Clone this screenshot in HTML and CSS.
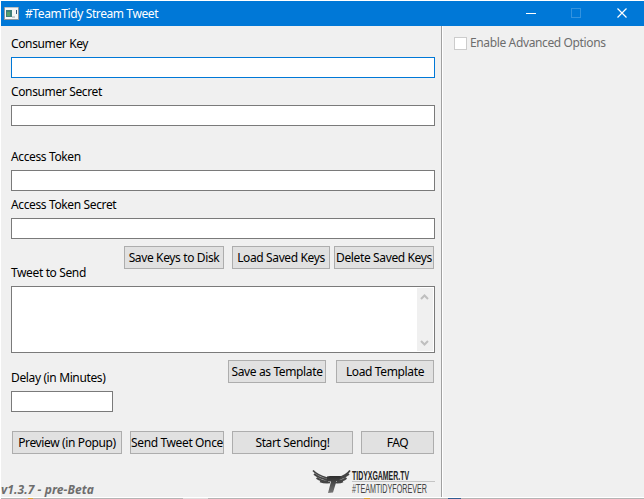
FILE: index.html
```html
<!DOCTYPE html>
<html lang="en">
<head>
<meta charset="utf-8">
<title>#TeamTidy Stream Tweet</title>
<link rel="stylesheet" href="styles.css">
</head>
<body>
<div class="window">
  <header class="titlebar">
    <svg class="app-icon" width="15" height="13" viewBox="0 0 15 13">
      <rect width="15" height="13" fill="#8d979e"/>
      <rect x="1" y="1" width="13" height="11" fill="#f4f6f6"/>
      <rect x="1" y="0" width="13" height="1" fill="#b9c2c8"/>
      <rect x="2" y="3" width="6" height="7" fill="#3f7f78"/>
      <rect x="3" y="5" width="3" height="4" fill="#55a06b"/>
      <rect x="8" y="9" width="3" height="2" fill="#c8cdd0"/>
      <rect x="12" y="3" width="1" height="4" fill="#35577a"/>
    </svg>
    <span class="title">#TeamTidy Stream Tweet</span>
    <svg class="controls" width="104" height="25" viewBox="0 0 104 25" fill="none">
      <path d="M0 12.500H10" stroke="#fff"/>
      <rect x="45.500" y="7.500" width="9" height="9" stroke="#3393df"/>
      <path d="M91.500 7.500L100.500 16.500M100.500 7.500L91.500 16.500" stroke="#fff" stroke-width="1.200"/>
    </svg>
  </header>
  <main class="body">
    <section class="left">
      <label class="label" for="ck">Consumer Key</label>
      <input class="field focused" id="ck">
      <label class="label" for="cs">Consumer Secret</label>
      <input class="field" id="cs">
      <label class="label token" for="at">Access Token</label>
      <input class="field" id="at">
      <label class="label" for="ats">Access Token Secret</label>
      <input class="field" id="ats">
      <div class="row keys">
        <button class="w100">Save Keys to Disk</button>
        <button class="w98">Load Saved Keys</button>
        <button class="w100">Delete Saved Keys</button>
      </div>
      <label class="label tweet">Tweet to Send</label>
      <div class="memo">
        <div class="scroll">
          <svg width="16" height="63" viewBox="0 0 16 63" fill="none" stroke="#bfbfbf" stroke-width="2">
            <path d="M4 11L7.500 7.500L11 11M4 53L7.500 56.500L11 53"/>
          </svg>
        </div>
      </div>
      <div class="row templates">
        <button class="w98">Save as Template</button>
        <button class="w98">Load Template</button>
      </div>
      <label class="label delay" for="dl">Delay (in Minutes)</label>
      <input class="field short" id="dl">
      <div class="row actions">
        <button class="w110">Preview (in Popup)</button>
        <button class="w94">Send Tweet Once</button>
        <button class="w121">Start Sending!</button>
        <button class="w73">FAQ</button>
      </div>
      <footer class="foot">
        <span class="version">v1.3.7 - pre-Beta</span>
        <svg class="logo" width="124" height="30" viewBox="0 0 124 30">
          <defs><linearGradient id="g" x2="0" y2="1"><stop stop-color="#2c2c2c"/><stop offset="1" stop-color="#777"/></linearGradient></defs>
          <g fill="none" stroke="#444" stroke-width="1.700">
            <path d="M0 2.500Q4 7 14 10M1 6Q6 10 15 12M3.500 10Q8 13 15 13.500M7 13.500Q11 15 17 14.500"/>
            <path d="M37 2.500Q34 7 25 10M36 6Q31 10 24 12M33.500 10Q30 13 24 13.500M30 13.500Q27 15 22 14.500"/>
          </g>
          <path d="M14 8.500L17 8H28L26 13H23.500L20 24.500L15 25L18 13.500H14Z" fill="url(#g)"/>
          <path d="M39 13.500H122" stroke="#c4c4c4"/>
          <text class="brand" x="39" y="12" textLength="57" lengthAdjust="spacingAndGlyphs">TIDYXGAMER.TV</text>
          <text class="tag" x="39" y="24.700" textLength="75" lengthAdjust="spacingAndGlyphs">#TEAMTIDYFOREVER</text>
        </svg>
      </footer>
    </section>
    <aside class="right">
      <label class="check"><span class="box"></span><span>Enable Advanced Options</span></label>
    </aside>
  </main>
  <div class="edge"><i class="e1"></i><i class="e2"></i><i class="e3"></i><i class="e4"></i></div>
</div>
</body>
</html>
```
FILE: styles.css
```css
* { box-sizing: border-box; }
body { margin: 0; background: #fff; overflow: hidden; }
.window {
  width: 644px; height: 499px; padding: 1px 0 0 1px;
  display: flex; flex-direction: column;
  font: 12px/16px "Noto Sans", "Open Sans", sans-serif; letter-spacing: -0.37px; color: #000;
}
.titlebar { height: 25px; flex: none; background: #0078d7; display: flex; align-items: center; padding-left: 3px; color: #fff; }
.title { margin-left: 6px; flex: 1; letter-spacing: -0.4px; }
.controls { flex: none; margin-right: 14px; }
.body { height: 471px; flex: none; display: flex; background: #f0f0f0; }
.left { width: 441px; padding: 10px 7px 0 10px; border-right: 1px solid #a0a0a0; display: flex; flex-direction: column; }
.right { flex: 1; border-left: 1px solid #fff; padding: 9px 0 0 11px; }
.label { display: block; height: 16px; margin: 6px 0 5px; white-space: nowrap; }
.label:first-child { margin-top: 0; }
.label.token { margin-top: 23px; }
.label.tweet { margin-top: -4px; }
.label.delay { margin-top: -13px; width: 110px; }
.field { display: block; width: 424px; height: 21px; flex: none; margin: 0; padding: 0 3px; border: 1px solid #7a7a7a; border-radius: 0; background: #fff; outline: 0; }
.field.focused { border-color: #0078d7; }
.field.short { width: 102px; }
.row { display: flex; flex: none; height: 23px; }
.keys { margin: 7px 0 0 113px; }
.keys button:nth-child(2) { margin: 0 4px 0 8px; }
.templates { margin: 7px 0 0 217px; gap: 10px; }
.actions { margin: 19px 0 0 1px; gap: 8px; }
button { height: 23px; flex: none; padding: 0; border: 1px solid #adadad; border-radius: 0; background: #e1e1e1; color: #000; font: inherit; letter-spacing: inherit; white-space: nowrap; display: flex; align-items: center; justify-content: center; }
.w73 { width: 73px; } .w94 { width: 94px; } .w98 { width: 98px; } .w100 { width: 100px; } .w110 { width: 110px; } .w121 { width: 121px; }
.memo { width: 424px; height: 67px; flex: none; border: 1px solid #7a7a7a; background: #fff; padding: 1px; display: flex; justify-content: flex-end; }
.scroll { width: 16px; height: 63px; background: #f0f0f0; }
.scroll svg { display: block; }
.foot { display: flex; justify-content: space-between; margin: 14px -3px 0 -10px; height: 29px; }
.version { font-weight: 700; font-style: italic; color: #6d6d6d; margin-top: 14px; white-space: nowrap; letter-spacing: 0.08px; }
.logo { flex: none; overflow: visible; }
.brand, .tag { font-family: "Liberation Sans", sans-serif; letter-spacing: 0; }
.brand { font-size: 12px; font-weight: 700; fill: #222; }
.tag { font-size: 12px; fill: #444; }
.check { display: flex; align-items: center; gap: 3px; color: #6d6d6d; }
.box { width: 13px; height: 13px; border: 1px solid #ccc; background: #fff; }
.edge { height: 1px; margin-top: 1px; background: #b4b4b4; display: flex; }
.edge i { height: 1px; }
.e1 { width: 5px; margin-left: 27px; background: #d9a43a; }
.e2 { width: 25px; margin-left: 150px; background: #ddd; }
.e3 { width: 6px; margin-left: 156px; background: #d9a43a; }
.e4 { width: 13px; margin-left: 78px; background: #315e91; }
```
